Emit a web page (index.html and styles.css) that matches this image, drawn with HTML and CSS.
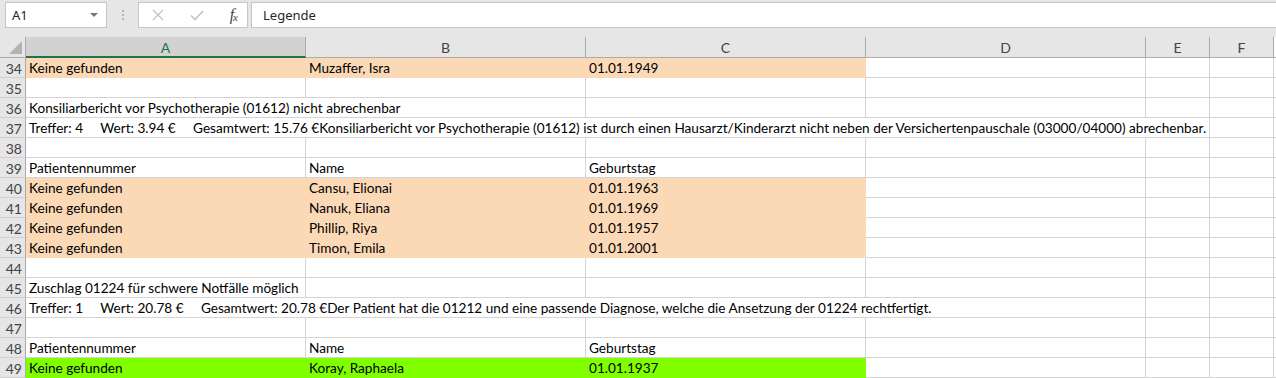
FILE: index.html
```html
<!DOCTYPE html>
<html lang="de">
<head>
<meta charset="utf-8">
<title>Excel</title>
<link rel="stylesheet" href="styles.css">
</head>
<body>
<div class="app">
  <div class="formula-bar">
    <div class="namebox">
      <span class="namebox-text">A1</span>
      <span class="namebox-arrow"></span>
    </div>
    <div class="grip"><i></i><i></i><i></i></div>
    <div class="fbuttons">
      <svg class="fb-icon" width="14" height="14" viewBox="0 0 14 14"><path d="M2 2 L12 12 M12 2 L2 12" stroke="#c4c4c4" stroke-width="1.4" fill="none"/></svg>
      <svg class="fb-icon" width="16" height="14" viewBox="0 0 16 14"><path d="M2 7.5 L6 11.5 L14 3" stroke="#c4c4c4" stroke-width="1.6" fill="none"/></svg>
      <span class="fx">f<sub>x</sub></span>
    </div>
    <div class="finput">Legende</div>
  </div>
  <div class="sheet">
    <div class="hdr corner"><span class="corner-tri"></span></div>
    <div class="hdr col sel">A</div>
    <div class="hdr col">B</div>
    <div class="hdr col">C</div>
    <div class="hdr col">D</div>
    <div class="hdr col">E</div>
    <div class="hdr col">F</div>
    <div class="hdr col rest"></div>

    <div class="rh">34</div>
    <div class="c peach">Keine gefunden</div>
    <div class="c peach">Muzaffer, Isra</div>
    <div class="c peach">01.01.1949</div>
    <div class="c"></div><div class="c"></div><div class="c"></div><div class="c rest"></div>

    <div class="rh">35</div>
    <div class="c"></div><div class="c"></div><div class="c"></div><div class="c"></div><div class="c"></div><div class="c"></div><div class="c rest"></div>

    <div class="rh">36</div>
    <div class="c span2">Konsiliarbericht vor Psychotherapie (01612) nicht abrechenbar</div>
    <div class="c"></div><div class="c"></div><div class="c"></div><div class="c"></div><div class="c rest"></div>

    <div class="rh">37</div>
    <div class="c span5">Treffer: 4     Wert: 3.94 €     Gesamtwert: 15.76 €Konsiliarbericht vor Psychotherapie (01612) ist durch einen Hausarzt/Kinderarzt nicht neben der Versichertenpauschale (03000/04000) abrechenbar.</div>
    <div class="c"></div><div class="c rest"></div>

    <div class="rh">38</div>
    <div class="c"></div><div class="c"></div><div class="c"></div><div class="c"></div><div class="c"></div><div class="c"></div><div class="c rest"></div>

    <div class="rh">39</div>
    <div class="c">Patientennummer</div>
    <div class="c">Name</div>
    <div class="c">Geburtstag</div>
    <div class="c"></div><div class="c"></div><div class="c"></div><div class="c rest"></div>

    <div class="rh">40</div>
    <div class="c peach">Keine gefunden</div>
    <div class="c peach">Cansu, Elionai</div>
    <div class="c peach">01.01.1963</div>
    <div class="c"></div><div class="c"></div><div class="c"></div><div class="c rest"></div>

    <div class="rh">41</div>
    <div class="c peach">Keine gefunden</div>
    <div class="c peach">Nanuk, Eliana</div>
    <div class="c peach">01.01.1969</div>
    <div class="c"></div><div class="c"></div><div class="c"></div><div class="c rest"></div>

    <div class="rh">42</div>
    <div class="c peach">Keine gefunden</div>
    <div class="c peach">Phillip, Riya</div>
    <div class="c peach">01.01.1957</div>
    <div class="c"></div><div class="c"></div><div class="c"></div><div class="c rest"></div>

    <div class="rh">43</div>
    <div class="c peach">Keine gefunden</div>
    <div class="c peach">Timon, Emila</div>
    <div class="c peach">01.01.2001</div>
    <div class="c"></div><div class="c"></div><div class="c"></div><div class="c rest"></div>

    <div class="rh">44</div>
    <div class="c"></div><div class="c"></div><div class="c"></div><div class="c"></div><div class="c"></div><div class="c"></div><div class="c rest"></div>

    <div class="rh">45</div>
    <div class="c">Zuschlag 01224 für schwere Notfälle möglich</div>
    <div class="c"></div><div class="c"></div><div class="c"></div><div class="c"></div><div class="c"></div><div class="c rest"></div>

    <div class="rh">46</div>
    <div class="c span4">Treffer: 1     Wert: 20.78 €     Gesamtwert: 20.78 €Der Patient hat die 01212 und eine passende Diagnose, welche die Ansetzung der 01224 rechtfertigt.</div>
    <div class="c"></div><div class="c"></div><div class="c rest"></div>

    <div class="rh">47</div>
    <div class="c"></div><div class="c"></div><div class="c"></div><div class="c"></div><div class="c"></div><div class="c"></div><div class="c rest"></div>

    <div class="rh">48</div>
    <div class="c">Patientennummer</div>
    <div class="c">Name</div>
    <div class="c">Geburtstag</div>
    <div class="c"></div><div class="c"></div><div class="c"></div><div class="c rest"></div>

    <div class="rh">49</div>
    <div class="c green">Keine gefunden</div>
    <div class="c green">Koray, Raphaela</div>
    <div class="c green">01.01.1937</div>
    <div class="c"></div><div class="c"></div><div class="c"></div><div class="c rest"></div>
  </div>
</div>
</body>
</html>
```

FILE: styles.css
```css
* { box-sizing: border-box; }
html, body { margin: 0; padding: 0; }
body {
  width: 1276px;
  height: 378px;
  overflow: hidden;
  background: #e6e6e6;
  font-family: "Lato", "Liberation Sans", sans-serif;
}
.app { display: flex; flex-direction: column; }

.formula-bar {
  height: 37px;
  display: flex;
  align-items: flex-start;
  padding: 2px 0 0 5px;
  background: #e6e6e6;
  font-family: "Noto Sans", "Open Sans", sans-serif;
}
.namebox {
  width: 102px;
  height: 26px;
  background: #fff;
  border: 1px solid #c6c6c6;
  display: flex;
  align-items: center;
  justify-content: space-between;
  padding: 0 8px 0 6px;
  font-size: 13px;
  color: #262626;
}
.namebox-arrow {
  width: 0; height: 0;
  border-left: 4px solid transparent;
  border-right: 4px solid transparent;
  border-top: 4px solid #777;
}
.grip {
  width: 31px;
  height: 26px;
  display: flex;
  flex-direction: column;
  align-items: center;
  justify-content: center;
  gap: 2px;
}
.grip i { display: block; width: 2px; height: 2px; background: #b4b4b4; }
.fbuttons {
  width: 110px;
  height: 26px;
  background: #fff;
  border: 1px solid #c6c6c6;
  display: flex;
  align-items: center;
  padding: 0 10px 0 12px;
  justify-content: space-between;
}
.fx {
  font-family: "Liberation Serif", serif;
  font-style: italic;
  font-size: 16px;
  color: #444;
  letter-spacing: -1px;
}
.fx sub { font-size: 11px; vertical-align: -1px; }
.finput {
  flex: 1;
  height: 26px;
  margin-left: 3px;
  background: #fff;
  border: 1px solid #c6c6c6;
  border-right: none;
  display: flex;
  align-items: center;
  padding-left: 11px;
  font-size: 13px;
  color: #262626;
}

.sheet {
  display: grid;
  grid-template-columns: 26px 280px 280px 280px 280px 64px 64px 2px;
  grid-template-rows: 21px;
  grid-auto-rows: 20px;
  background: #fff;
  font-size: 13.6px;
  color: #000;
}
.hdr {
  background: #e6e6e6;
  border-right: 1px solid #ababab;
  border-bottom: 1px solid #ababab;
  font-size: 14px;
  color: #444;
  display: flex;
  align-items: center;
  justify-content: center;
  padding-top: 1px;
}
.hdr.sel {
  background: #d2d2d2;
  color: #217346;
  border-bottom: 2px solid #217346;
}
.hdr.rest { border-right: none; background: #fff; }
.corner { position: relative; }
.corner-tri {
  position: absolute;
  right: 3px;
  bottom: 3px;
  width: 0; height: 0;
  border-left: 13px solid transparent;
  border-bottom: 13px solid #b4b4b4;
}
.rh {
  background: #e6e6e6;
  border-right: 1px solid #ababab;
  border-bottom: 1px solid #d0d0d0;
  text-align: right;
  padding-right: 3px;
  padding-top: 1px;
  line-height: 19px;
  font-size: 14px;
  color: #444;
}
.c {
  border-right: 1px solid #d4d4d4;
  border-bottom: 1px solid #d4d4d4;
  padding-left: 3px;
  padding-top: 1px;
  line-height: 19px;
  white-space: pre;
  overflow: visible;
}
.c.rest { border-right: none; }
.span2 { grid-column: span 2; }
.span4 { grid-column: span 4; }
.span5 { grid-column: span 5; }
.peach { background: #fcd9b6; border-color: transparent; }
.green { background: #80ff00; border-color: transparent; }
```
